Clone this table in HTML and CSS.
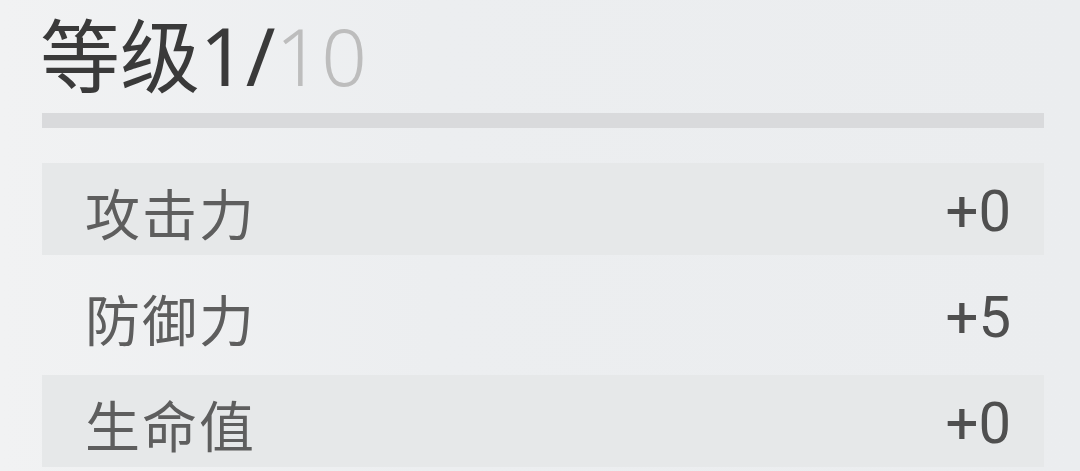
FILE: index.html
```html
<!DOCTYPE html>
<html lang="zh">
<head>
    <meta charset="UTF-8">
    <meta name="viewport" content="width=device-width, initial-scale=1.0">
    <title>等级</title>
    <link rel="stylesheet" href="styles.css">
</head>
<body>
    <div class="panel">
        <h1 class="level">等级1/<span class="max">10</span></h1>
        <div class="bar"></div>

        <div class="stats">
            <div class="row shaded">
                <span class="name">攻击力</span>
                <span class="value">+0</span>
            </div>
            <div class="row">
                <span class="name">防御力</span>
                <span class="value">+5</span>
            </div>
            <div class="row shaded">
                <span class="name">生命值</span>
                <span class="value">+0</span>
            </div>
        </div>
    </div>
</body>
</html>
```

FILE: styles.css
```css
html, body {
    height: 100%;
}
body {
    margin: 0;
    padding: 0;
    overflow: hidden;
    font-family: "Noto Sans", "Noto Sans CJK SC", sans-serif;
    background: linear-gradient(90deg, #f1f2f3 0%, #eceef0 40%, #ebedef 100%);
}
.panel {
    width: 1002px;
    padding: 0 0 0 42px;
}
.level {
    margin: 0 0 0 -2px;
    padding-top: 10px;
    height: 107px;
    box-sizing: border-box;
    font-size: 80px;
    font-weight: 400;
    line-height: 90px;
    color: #3a3a3a;
}
.level .max {
    color: #bdbdbd;
    font-weight: 300;
}
.bar {
    height: 15px;
    background-color: #d9dadc;
    margin-top: 6px;
}
.stats {
    margin-top: 35px;
    display: flex;
    flex-direction: column;
    gap: 14px;
}
.row {
    height: 92px;
    display: flex;
    align-items: center;
    justify-content: space-between;
    padding: 4px 33px 0 43px;
    box-sizing: border-box;
}
.row.shaded {
    background-color: #e6e8e9;
}
.name {
    font-family: "Noto Sans CJK SC", sans-serif;
    font-size: 55px;
    color: #5e5e5e;
    letter-spacing: 2px;
}
.value {
    font-family: Roboto, "Noto Sans", sans-serif;
    font-size: 58px;
    color: #4f4f4f;
}
```
